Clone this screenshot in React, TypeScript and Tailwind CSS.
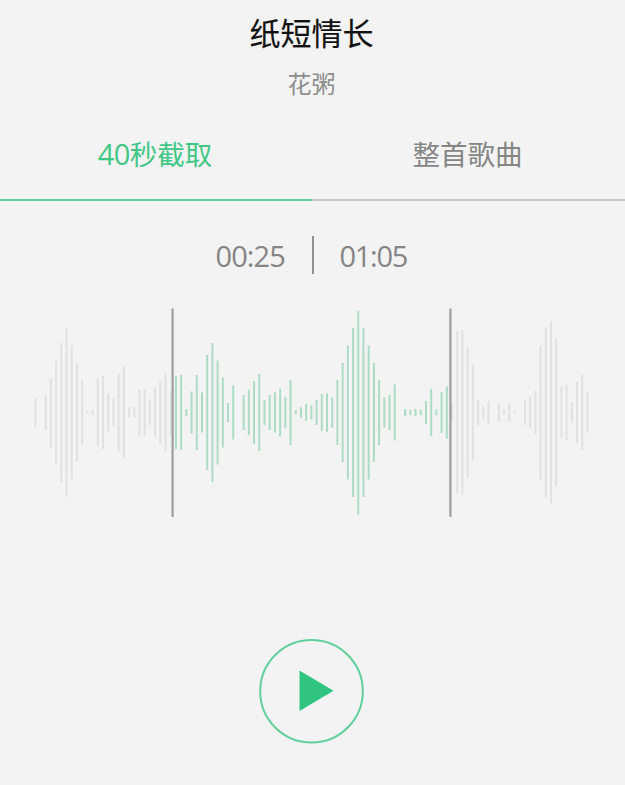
import { useState } from 'react';

type Mode = 'clip' | 'full';

const PITCH = 5.209;
const FIRST_X = 35.3;
const CENTER_Y = 112.5;

// Bars inside [CLIP_START, CLIP_END] belong to the selected range
const CLIP_START = 27;
const CLIP_END = 79;

const bars = [
  28, 0, 35, 69.5, 104, 139, 168.5, 134, 99, 64, 2, 5.5, 68, 73, 38, 28, 78, 92, 10.5, 10.5,
  45.5, 47, 25, 50, 63, 78, 43.5, 73, 75, 7, 42, 75, 40, 115, 139, 104, 70, 19, 54, 0,
  35, 45.5, 63, 77, 25, 35, 40, 47.5, 31.5, 65, 4, 10.5, 17, 14, 25, 37, 38.5, 30, 65, 99,
  134, 169, 203.5, 169, 134, 99, 65, 30, 35, 56, 0, 7, 5.5, 7, 5.5, 23, 47.5, 5.5, 40.5, 52.5,
  17, 162, 165, 130, 96, 25, 12, 23, 0, 19, 5.5, 19, 2, 0, 25, 31.5, 43.5, 134, 169, 183,
  148, 52, 56, 21, 61, 75, 40.5,
];

const tabs: { value: Mode; number: string; label: string }[] = [
  { value: 'clip', number: '40', label: '秒截取' },
  { value: 'full', number: '', label: '整首歌曲' },
];

function Waveform() {
  return (
    <svg width="625" height="225" viewBox="0 0 625 225" className="block">
      {bars.map((h, i) => {
        const selected = i >= CLIP_START && i <= CLIP_END;
        return (
          <rect
            key={i}
            x={FIRST_X + i * PITCH - 1}
            y={CENTER_Y - h / 2}
            width={2}
            height={h}
            fill={selected ? '#acdcc4' : '#e1e1e1'}
          />
        );
      })}
      <rect x="171.5" y="8.5" width="2.2" height="208.5" fill="#9d9d9d" />
      <rect x="449.3" y="8.5" width="2.2" height="208.5" fill="#9d9d9d" />
    </svg>
  );
}

export default function App() {
  const [mode, setMode] = useState<Mode>('clip');

  return (
    <div className="flex h-[785px] w-[625px] flex-col overflow-hidden bg-[#f3f3f3] font-['Noto_Sans_CJK_SC',sans-serif]">
      {/* Song */}
      <header className="flex h-[110px] flex-col items-center pt-[11px] pr-0.5">
        <h1 className="text-[31px] leading-[42px] text-[#111] [-webkit-text-stroke:0.15px_#111]">纸短情长</h1>
        <p className="mt-3 text-2xl leading-9 text-[#8e8e8e]">花粥</p>
      </header>

      {/* Tabs */}
      <nav className="grid h-[91px] grid-cols-[312px_313px]">
        {tabs.map(({ value, number, label }) => {
          const active = mode === value;
          return (
            <button
              key={value}
              onClick={() => setMode(value)}
              className={`flex justify-center border-b-2 pt-[22px] pr-0.5 text-[27.5px] leading-[42px] ${
                active ? 'border-[#61cf98] text-[#41c785]' : 'border-[#c9c9c9] text-[#858585]'
              }`}
            >
              {number && (
                <span className="pt-px font-['Open_Sans',sans-serif] text-[29px] tracking-[-0.5px]">{number}</span>
              )}
              {label}
            </button>
          );
        })}
      </nav>

      {/* Range */}
      <div className="flex h-[99px] items-start justify-center pt-[35px] font-['Open_Sans',sans-serif] text-[29px] leading-[40px] text-[#858585]">
        <span className="w-[70px] tracking-[-0.9px]">00:25</span>
        <div className="mr-[26px] ml-[26px] h-[38px] w-0.5 bg-[#929292]" />
        <span className="w-[70px] tracking-[-1.3px]">01:05</span>
      </div>

      <Waveform />

      {/* Play */}
      <div className="flex justify-center pt-[114px] pr-0.5">
        <button aria-label="播放">
          <svg width="105" height="105" viewBox="0 0 105 105">
            <circle cx="52.5" cy="52.3" r="51.3" fill="none" stroke="#61d09a" strokeWidth="2" />
            <path d="M40.5 31.5V72L74.5 51.7Z" fill="#2fc580" />
          </svg>
        </button>
      </div>
    </div>
  );
}
